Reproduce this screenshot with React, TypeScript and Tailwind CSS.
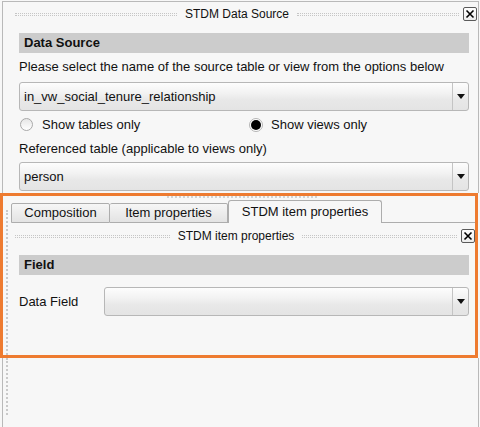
import React from "react";

function Arrow() {
  return (
    <svg width="8" height="5" viewBox="0 0 8 5">
      <polygon points="0,0 8,0 4,5" fill="#111" />
    </svg>
  );
}

function Combo({ value, className = "" }: { value?: string; className?: string }) {
  return (
    <div
      className={`flex h-[29px] rounded-[3px] border border-[#b7b7b7] bg-[linear-gradient(to_bottom,#fdfdfd_0%,#f2f2f2_38%,#e8e8e8_62%,#e4e4e4_100%)] ${className}`}
    >
      <div className="flex flex-1 items-center pl-[4px] text-[13px] text-[#111]">{value}</div>
      <div className="flex w-[16px] items-center justify-center border-l border-[#c4c4c4]">
        <Arrow />
      </div>
    </div>
  );
}

function CloseBtn() {
  return (
    <div className="flex h-[14px] w-[14px] items-center justify-center rounded-[2px] border border-[#5a5a5a] bg-[linear-gradient(to_bottom,#ffffff,#ececec)]">
      <svg width="10" height="10" viewBox="0 0 10 10">
        <path d="M1.5 1.5 L8.5 8.5 M8.5 1.5 L1.5 8.5" stroke="#000" strokeWidth="1.6" />
      </svg>
    </div>
  );
}

function Dots() {
  return <div className="h-[3px] flex-1 border-y border-dotted border-[#c6c6c6]" />;
}

function TitleRow({ title, className = "" }: { title: string; className?: string }) {
  return (
    <div className={`flex items-center ${className}`}>
      <Dots />
      <span className="mx-[8px] text-[12px] text-[#111]">{title}</span>
      <Dots />
      <div className="ml-[4px]">
        <CloseBtn />
      </div>
    </div>
  );
}

function Header({ label }: { label: string }) {
  return (
    <div className="flex h-[20px] items-center bg-[#cccccc] pl-[5px] text-[13px] font-bold text-[#111]">
      {label}
    </div>
  );
}

function Tab({ label, width, first }: { label: string; width: string; first?: boolean }) {
  return (
    <div
      className={`flex h-[20px] items-center justify-center rounded-t-[2px] border border-[#adadad] bg-[linear-gradient(to_bottom,#f6f6f6,#e3e3e3)] text-[13px] text-[#111] ${width} ${first ? "" : "border-l-0"}`}
    >
      {label}
    </div>
  );
}

export default function App() {
  return (
    <div className="h-[427px] w-[480px] overflow-hidden bg-[#f7f7f7] font-['Liberation_Sans',Arial,sans-serif] text-[#111]">
      {/* STDM Data Source dock */}
      <div className="ml-[2px] mt-[1px] w-[477px] border-x border-t border-[#b9b9b9] pb-[2px]">
        <TitleRow title="STDM Data Source" className="h-[24px] pl-[12px] pr-[1px]" />
        <div className="pl-[16px] pr-[9px]">
          <div className="mt-[7px]">
            <Header label="Data Source" />
          </div>
          <div className="mt-[5px] flex h-[18px] items-center text-[13px]">
            Please select the name of the source table or view from the options below
          </div>
          <Combo value="in_vw_social_tenure_relationship" className="mt-[6px]" />
          <div className="flex h-[27px] items-center text-[13px]">
            <div className="flex w-[230px] items-center">
              <div className="ml-[1px] h-[13px] w-[13px] rounded-full border border-[#a9a9a9] bg-[linear-gradient(to_bottom,#e6e6e6,#ffffff)]" />
              <span className="ml-[9px]">Show tables only</span>
            </div>
            <div className="flex items-center">
              <div className="flex h-[14px] w-[14px] items-center justify-center rounded-full border border-[#b5b5b5] bg-white">
                <div className="h-[10px] w-[10px] rounded-full bg-black" />
              </div>
              <span className="ml-[8px]">Show views only</span>
            </div>
          </div>
          <div className="mt-[2px] flex h-[18px] items-center text-[13px]">
            Referenced table (applicable to views only)
          </div>
          <Combo value="person" className="mt-[4px]" />
        </div>
      </div>

      {/* Highlighted tab widget */}
      <div className="flex h-[165px] w-[478px] border-[3px] border-[#ee7b30]">
        <div className="w-[8px]">
          <div className="ml-[3px] mt-[14px] h-[145px] w-[2px] border-l-2 border-dotted border-[#c9c9c9]" />
        </div>
        <div className="flex-1">
          <div className="ml-[156px] h-[4px] w-[150px] border-t-2 border-dotted border-[#d2d2d2]" />
          <div className="flex h-[23px] items-end">
            <Tab label="Composition" width="w-[99px]" first />
            <Tab label="Item properties" width="w-[118px]" />
            <div className="flex h-[23px] w-[154px] items-center justify-center rounded-t-[3px] border border-b-0 border-[#adadad] bg-[#f7f7f7] pb-[1px] text-[13px] text-[#111]">
              STDM item properties
            </div>
            <div className="h-px flex-1 bg-[#adadad]" />
          </div>
          <TitleRow title="STDM item properties" className="h-[26px] pl-[4px]" />
          <div className="pl-[8px] pr-[6px]">
            <div className="mt-[6px]">
              <Header label="Field" />
            </div>
            <div className="mt-[12px] flex items-center">
              <div className="w-[85px] text-[13px]">Data Field</div>
              <Combo className="flex-1" />
            </div>
          </div>
        </div>
      </div>

      {/* remaining dock area */}
      <div className="ml-[2px] h-[69px] w-[477px] border-x border-[#b9b9b9]">
        <div className="ml-[3px] h-[57px] w-[2px] border-l-2 border-dotted border-[#c9c9c9]" />
      </div>
    </div>
  );
}
